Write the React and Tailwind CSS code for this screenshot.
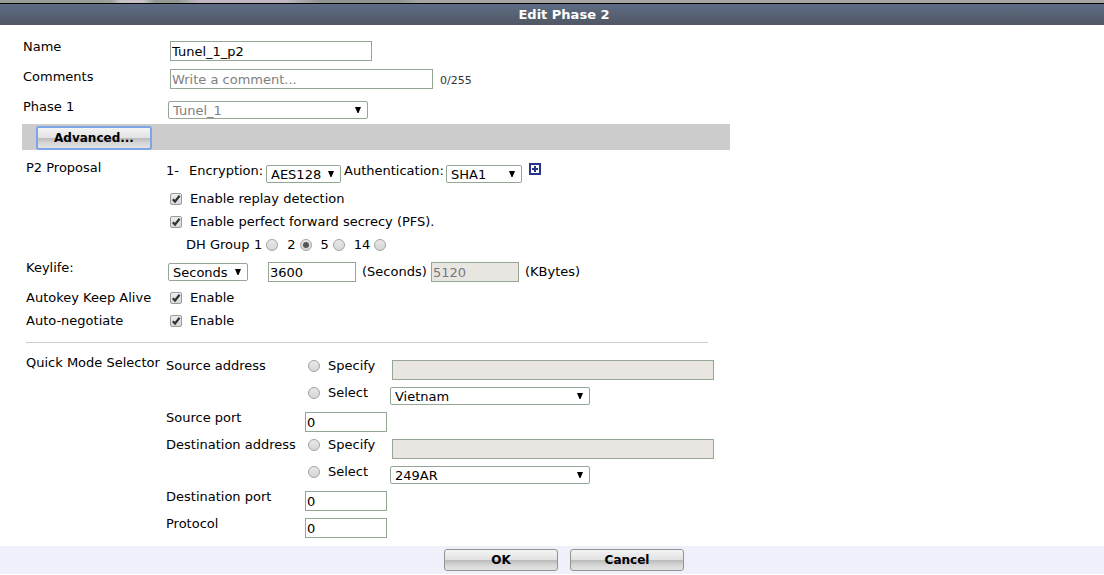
import { useState } from 'react';

const Select = ({ id, label, options, value, onChange, disabled, className }) => (
    <span className={`relative inline-block ${className}`}>
        <select
            id={id}
            aria-label={label}
            value={value}
            onChange={onChange}
            disabled={disabled}
            className="block w-full h-[18px] pl-1 pr-4 pt-px appearance-none rounded-xs border border-[#94a694] bg-white leading-[15px] text-black disabled:text-[#808080] disabled:opacity-100"
        >
            {options.map(option => (
                <option key={option}>{option}</option>
            ))}
        </select>
        <svg className="absolute right-[7px] top-1.5 w-1.5 h-1.5 pointer-events-none" viewBox="0 0 6 6">
            <path d="M0 0h6L3.5 6h-1z" fill="#000" />
        </svg>
    </span>
);

const TextBox = ({ className, ...props }) => (
    <input
        type="text"
        className={`h-5 px-px border border-[#94a694] bg-white leading-4 text-black placeholder:text-[#808080] disabled:bg-[#e9e6e2] disabled:text-[#777] ${className}`}
        {...props}
    />
);

const Checkbox = ({ id, children }) => (
    <div className="flex items-center h-[23px] pl-1">
        <span className="relative w-3 h-3">
            <input
                id={id}
                type="checkbox"
                defaultChecked
                className="peer block w-3 h-3 appearance-none rounded-xs border border-[#9a9a9a] bg-linear-to-b from-[#eee] to-[#d8d8d8]"
            />
            <svg className="absolute inset-0 w-3 h-3 pointer-events-none invisible peer-checked:visible" viewBox="0 0 12 12">
                <path d="M2.8 6.2 5 8.5 9.6 2.8" fill="none" stroke="#333" strokeWidth="2.2" />
            </svg>
        </span>
        <label htmlFor={id} className="pl-2">{children}</label>
    </div>
);

const Radio = props => (
    <span className="relative w-3 h-3 shrink-0">
        <input
            type="radio"
            className="peer block w-3 h-3 appearance-none rounded-full border border-[#a3a3a3] bg-linear-to-b from-[#e8e8e8] to-[#d6d6d6]"
            {...props}
        />
        <span className="absolute inset-[3px] rounded-full bg-[#555] pointer-events-none invisible peer-checked:visible" />
    </span>
);

const Button = ({ className, children, ...props }) => (
    <button
        type="button"
        className={`rounded-[3px] border bg-[linear-gradient(#f4f4f4,#e2e2e2_48%,#bcbcbc_52%,#d6d6d6_75%,#e4e4e4)] text-xs font-bold leading-4 text-black ${className}`}
        {...props}
    >
        {children}
    </button>
);

const AddressRows = ({ name, title, options }) => {
    const [address, setAddress] = useState(options[0]);

    return (
        <>
            <div className="flex items-start h-[27px]">
                <span className="w-[142px] shrink-0">{title}</span>
                <span className="flex items-center w-[84px] shrink-0 gap-2">
                    <Radio id={`${name}-specify`} name={name} />
                    <label htmlFor={`${name}-specify`}>Specify</label>
                </span>
                <div className="pt-0.5 flex-1">
                    <TextBox aria-label={`${title} value`} disabled className="block w-full" />
                </div>
            </div>
            <div className="flex items-start h-[25px]">
                <span className="flex items-center w-[224px] shrink-0 pl-[142px] gap-2">
                    <Radio id={`${name}-select`} name={name} />
                    <label htmlFor={`${name}-select`}>Select</label>
                </span>
                <div className="pt-0.5">
                    <Select
                        label={`${title} object`}
                        options={options}
                        value={address}
                        onChange={e => setAddress(e.target.value)}
                        className="w-[200px]"
                    />
                </div>
            </div>
        </>
    );
};

const NumberRow = ({ id, label, className }) => (
    <div className={`flex items-start ${className}`}>
        <label htmlFor={id} className="w-[139px]">{label}</label>
        <div className="pt-0.5">
            <TextBox id={id} defaultValue="0" className="block w-[82px]" />
        </div>
    </div>
);

export default function App() {
    const [encryption, setEncryption] = useState('AES128');
    const [authentication, setAuthentication] = useState('SHA1');
    const [keylife, setKeylife] = useState('Seconds');
    const [dhGroup, setDhGroup] = useState('2');

    return (
        <div className="bg-white font-['Verdana','DejaVu_Sans',sans-serif] text-[13px] leading-4 text-black">
            {/* Title bar */}
            <div className="h-[3px] bg-[linear-gradient(90deg,#98a096_10%,#c9c3c9_11%,#c9c3c9_13%,#929a90_14%,#929a90_16%,#c0b6c0_18%,#c0b6c0_26%,#8f948e_29%,#8f948e_36%,#a5a6a2_38%)]" />
            <header className="h-[22px] pl-6 border-t border-black bg-linear-to-b from-[#5d6c84] to-[#505763] text-center">
                <h1 className="font-bold leading-[22px] text-white">Edit Phase 2</h1>
            </header>

            <form>
                <div className="max-w-[730px] pl-[22px] pt-3.5">
                    <div className="flex items-start h-[30px]">
                        <label htmlFor="name" className="w-[148px] pl-px">Name</label>
                        <div className="pt-0.5">
                            <TextBox id="name" defaultValue="Tunel_1_p2" className="block w-[202px]" />
                        </div>
                    </div>
                    <div className="flex items-start h-[30px]">
                        <label htmlFor="comments" className="w-[148px] pl-px">Comments</label>
                        <TextBox id="comments" placeholder="Write a comment..." className="w-[263px]" />
                        <span className="pl-[7px] pt-0.5 text-[11px] leading-5 text-[#333]">0/255</span>
                    </div>
                    <div className="flex items-start h-[25px]">
                        <label htmlFor="phase1" className="w-[146px] pl-px">Phase 1</label>
                        <div className="pt-0.5">
                            <Select id="phase1" options={['Tunel_1']} value="Tunel_1" disabled className="w-[200px]" />
                        </div>
                    </div>

                    <div className="flex items-end h-[26px] pl-3.5 bg-[#cccccc]">
                        <Button className="w-[116px] h-6 border-2 border-[#7ea6e6]">Advanced...</Button>
                    </div>

                    {/* Proposal */}
                    <div className="flex items-start pl-1 pt-2.5 pb-px">
                        <h2 className="w-[140px]">P2 Proposal</h2>
                        <div className="pt-[3px]">
                            <div className="flex items-start h-6">
                                <span className="w-[23px]">1-</span>
                                <label htmlFor="encryption" className="w-[77px]">Encryption:</label>
                                <div className="pt-0.5">
                                    <Select
                                        id="encryption"
                                        options={['AES128', 'AES192', 'AES256', '3DES', 'DES']}
                                        value={encryption}
                                        onChange={e => setEncryption(e.target.value)}
                                        className="w-[75px]"
                                    />
                                </div>
                                <label htmlFor="authentication" className="w-[105px] pl-[3px]">Authentication:</label>
                                <div className="pt-0.5">
                                    <Select
                                        id="authentication"
                                        options={['SHA1', 'SHA256', 'MD5']}
                                        value={authentication}
                                        onChange={e => setAuthentication(e.target.value)}
                                        className="w-[76px]"
                                    />
                                </div>
                                <button type="button" aria-label="Add proposal" className="ml-[7px]">
                                    <svg className="block w-3 h-3" viewBox="0 0 12 12">
                                        <path d="M1 1h10v10H1z" fill="#fff" stroke="#26348b" strokeWidth="2" />
                                        <path d="M6 3v6M3 6h6" stroke="#26348b" strokeWidth="2" />
                                    </svg>
                                </button>
                            </div>
                            <Checkbox id="replay">Enable replay detection</Checkbox>
                            <Checkbox id="pfs">Enable perfect forward secrecy (PFS).</Checkbox>
                            <div className="flex items-center h-[23px] pl-5">
                                <span className="w-[68px]">DH Group</span>
                                {['1', '2', '5', '14'].map(group => (
                                    <span key={group} className="flex items-center gap-1 pr-[9px]">
                                        <label htmlFor={`dh-${group}`}>{group}</label>
                                        <Radio
                                            id={`dh-${group}`}
                                            name="dh-group"
                                            checked={dhGroup === group}
                                            onChange={() => setDhGroup(group)}
                                        />
                                    </span>
                                ))}
                            </div>
                        </div>
                    </div>

                    {/* Lifetime */}
                    <div className="flex items-start h-[29px] pl-1 pt-[3px]">
                        <label htmlFor="keylife" className="w-[142px]">Keylife:</label>
                        <div className="flex items-center h-6">
                            <Select
                                id="keylife"
                                options={['Seconds', 'KBytes', 'Both']}
                                value={keylife}
                                onChange={e => setKeylife(e.target.value)}
                                className="w-20"
                            />
                            <TextBox id="seconds" defaultValue="3600" className="w-[88px] ml-5" />
                            <label htmlFor="seconds" className="w-[75px] pl-1.5">(Seconds)</label>
                            <TextBox id="kbytes" defaultValue="5120" disabled className="w-[88px]" />
                            <label htmlFor="kbytes" className="pl-1.5">(KBytes)</label>
                        </div>
                    </div>
                    <div className="flex items-center pl-1">
                        <span className="w-[140px]">Autokey Keep Alive</span>
                        <Checkbox id="keepalive">Enable</Checkbox>
                    </div>
                    <div className="flex items-center pl-1">
                        <span className="w-[140px]">Auto-negotiate</span>
                        <Checkbox id="negotiate">Enable</Checkbox>
                    </div>

                    <hr className="ml-1 mr-[22px] mt-2.5 border-[#c8cec8]" />

                    {/* Selectors */}
                    <div className="flex items-start pl-1 pr-4 pt-3">
                        <h2 className="w-[140px] shrink-0">Quick Mode Selector</h2>
                        <div className="flex-1 pt-[3px]">
                            <AddressRows name="source" title="Source address" options={['Vietnam']} />
                            <NumberRow id="source-port" label="Source port" className="h-[27px]" />
                            <AddressRows name="destination" title="Destination address" options={['249AR']} />
                            <NumberRow id="destination-port" label="Destination port" className="h-[27px]" />
                            <NumberRow id="protocol" label="Protocol" className="h-[30px]" />
                        </div>
                    </div>
                </div>

                <footer className="flex items-center justify-center h-7 gap-3 pl-6 bg-[#eff1fa]">
                    <Button className="w-[114px] h-[22px] border-[#8f968f]">OK</Button>
                    <Button className="w-[114px] h-[22px] border-[#8f968f]">Cancel</Button>
                </footer>
            </form>
        </div>
    );
}
